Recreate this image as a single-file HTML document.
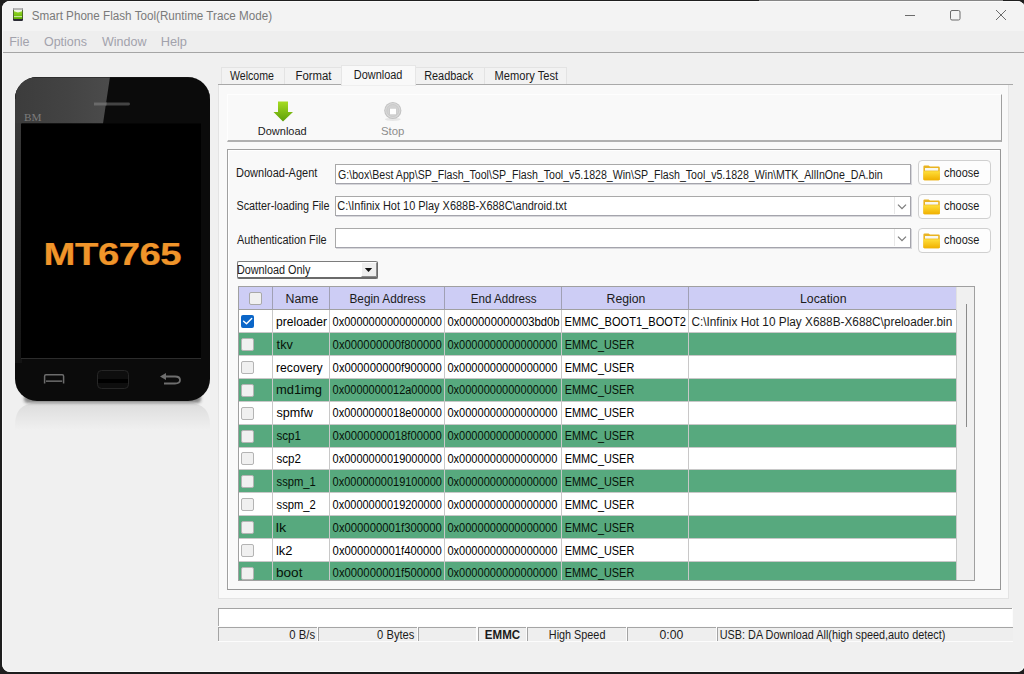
<!DOCTYPE html>
<html><head><meta charset="utf-8">
<style>
*{box-sizing:border-box;margin:0;padding:0}
html,body{width:1024px;height:674px;overflow:hidden;background:#1e1e1e;font-family:"Liberation Sans",sans-serif;}
.a{position:absolute}
.t{position:absolute;line-height:1;white-space:pre;font-size:11px;color:#1a1a1a}
#win{position:absolute;left:2px;top:1px;width:1023px;height:671px;background:#f0f0f0;border-radius:8px;overflow:hidden}
#rim{position:absolute;left:2px;top:1px;width:1023px;height:671px;border-radius:8px;border:1px solid #fafafa;z-index:5}
svg{position:absolute;left:0;top:0}
.tab{position:absolute;top:66.5px;height:18px;background:#f2f2f2;border:1px solid #e3e3e3;border-bottom:none}
.cb{position:absolute;width:13px;height:13px;border:1px solid #a8a8a8;border-radius:2px;background:#f0f0f0}
.btn{position:absolute;left:918px;width:73px;height:25px;border:1px solid #d0d0d0;border-radius:4px;background:#fdfdfd}
</style></head><body>
<div id="win">
  <div class="a" style="left:0;top:0;width:1030px;height:30px;background:#f3f3f3"></div>
  <div class="a" style="left:0;top:30px;width:1030px;height:21px;background:#eeeeee"></div>
  <div class="a" style="left:0;top:51px;width:1030px;height:1px;background:#a5a5a5"></div>
</div>
<!-- title -->
<svg width="1024" height="674" viewBox="0 0 1024 674">
  <rect x="759" y="0" width="244" height="1" fill="#858585"/>
  <defs>
    <linearGradient id="icg" x1="0" y1="0" x2="0" y2="1">
      <stop offset="0" stop-color="#9be02a"/><stop offset="1" stop-color="#5fae00"/>
    </linearGradient>
    <linearGradient id="hl" x1="0" y1="0" x2="1" y2="0">
      <stop offset="0" stop-color="#3a3a3a"/><stop offset="0.6" stop-color="#434343"/><stop offset="1" stop-color="#4c4c4c"/>
    </linearGradient>
    <linearGradient id="refl" x1="0" y1="0" x2="0" y2="1">
      <stop offset="0" stop-color="#dcdcdc"/><stop offset="0.5" stop-color="#e6e6e6"/><stop offset="1" stop-color="#f0f0f0"/>
    </linearGradient>
    <linearGradient id="arr" x1="0" y1="0" x2="0" y2="1">
      <stop offset="0" stop-color="#a6dc22"/><stop offset="1" stop-color="#5c9f08"/>
    </linearGradient>
    <linearGradient id="fold" x1="0" y1="0" x2="0" y2="1">
      <stop offset="0" stop-color="#ffdf3a"/><stop offset="1" stop-color="#f0b000"/>
    </linearGradient>
    <filter id="blur1" x="-20%" y="-50%" width="140%" height="200%"><feGaussianBlur stdDeviation="1.5"/></filter>
    <linearGradient id="lstrip" x1="0" y1="0" x2="0" y2="1"><stop offset="0" stop-color="#3a3a3a"/><stop offset="0.5" stop-color="#262626"/><stop offset="1" stop-color="#141414"/></linearGradient>
    <clipPath id="phc"><rect x="15" y="77" width="195" height="324" rx="22"/></clipPath>
  </defs>
  <!-- app icon -->
  <rect x="13" y="8" width="10" height="13" rx="1.2" fill="#2c2c36"/>
  <rect x="13" y="8" width="10" height="2" rx="1" fill="#b9b9b9"/>
  <rect x="13.6" y="10" width="8.8" height="9" fill="url(#icg)"/>
  <path d="M14 10 L22 10 L22 11.2 L18 12.6 L14 11.2 Z" fill="#eef4e4"/>
  <rect x="14" y="16.2" width="8" height="0.9" fill="#d8efb8"/>
  <!-- window controls -->
  <rect x="905" y="15" width="10" height="1" fill="#6b6b6b"/>
  <rect x="950.5" y="10.5" width="9.5" height="9.5" rx="1.5" fill="none" stroke="#6b6b6b" stroke-width="1"/>
  <path d="M996 10 L1006 20 M1006 10 L996 20" stroke="#6b6b6b" stroke-width="1"/>

  <!-- phone reflection -->
  <path d="M15 430 L15 425 Q15 403 37 403 L188 403 Q210 403 210 425 L210 430 Z" fill="url(#refl)"/>
  <rect x="24" y="394" width="177" height="9" rx="4" fill="#202020" opacity="0.5" filter="url(#blur1)"/>
  <!-- phone -->
  <rect x="15" y="77" width="195" height="324" rx="22" fill="#0b0b0b"/>
  <g clip-path="url(#phc)">
    <path d="M0 60 L112.5 60 L103 123.5 L0 123.5 Z" fill="url(#hl)"/>
    <rect x="14" y="123" width="8" height="240" fill="url(#lstrip)"/>
    <path d="M15 99 Q15 77 37 77 L188 77 Q210 77 210 99" fill="none" stroke="#1c1c1c" stroke-width="1"/>
  </g>
  <rect x="21" y="123.5" width="180" height="234.5" fill="#000"/>
  <rect x="21" y="358" width="180" height="1" fill="#2c2c2c"/>
  <rect x="94" y="102.6" width="36" height="2.8" rx="1.4" fill="#444"/><path d="M94 102.6 L106.8 102.6 L106.4 105.4 L94 105.4 Z" fill="#6a6a6a"/>
  <text x="24" y="120.5" font-family="Liberation Serif" font-size="10.5" fill="#7c7c7c" textLength="17.5" lengthAdjust="spacingAndGlyphs">BM</text>
  <g transform="translate(43.6,264.8) scale(1.215,1)"><text x="0" y="0" font-family="Liberation Sans" font-weight="700" font-size="31.5" letter-spacing="-0.4" fill="#f0952a" stroke="#f0952a" stroke-width="0.25">MT6765</text></g>
  <!-- menu button -->
  <path d="M44.6 383.6 L44.6 376.2 Q44.6 374.8 46 374.8 L62.2 374.8 Q63.6 374.8 63.6 376.2 L63.6 383.6" fill="none" stroke="#6c6c6c" stroke-width="1.5"/>
  <rect x="46" y="380.4" width="16.2" height="1.5" fill="#6c6c6c"/>
  <!-- home -->
  <rect x="97.5" y="370.5" width="31" height="18" rx="4" fill="#0e0e0e" stroke="#262626" stroke-width="1"/>
  <rect x="98" y="379" width="30" height="4" fill="#000"/>
  <!-- back -->
  <path d="M166 373 L160 376.5 L166 380 Z" fill="#6e6e6e"/>
  <path d="M165 376.5 L175 376.5 Q180 376.5 180 380 Q180 383.5 175 383.5 L164 383.5" fill="none" stroke="#6e6e6e" stroke-width="1.8"/>

</svg>


<!-- tab panel -->
<div class="a" style="left:218px;top:84px;width:791px;height:515px;background:#f9f9f9;border-left:1px solid #e3e3e3;border-right:1px solid #e3e3e3;border-bottom:1px solid #e3e3e3"></div>
<div class="tab" style="left:221px;width:64px"></div>
<div class="tab" style="left:284px;width:58px"></div>
<div class="tab" style="left:415px;width:70px"></div>
<div class="tab" style="left:484px;width:83px"></div>
<div class="a" style="left:218px;top:84px;width:795px;height:1px;background:#a9a9a9"></div>
<div class="a" style="left:341px;top:64.5px;width:75px;height:21px;background:#f9f9f9;border:1px solid #e6e6e6;border-bottom:none"></div>
<div class="a" style="left:342px;top:85px;width:73px;height:1px;background:#efefef"></div>

<!-- toolbar box -->
<div class="a" style="left:227px;top:94px;width:775px;height:48px;border-top:1px solid #fefefe;border-left:1px solid #fefefe;border-right:1px solid #a0a0a0;border-bottom:2px solid #b0b0b0"></div>

<!-- group box -->
<div class="a" style="left:227px;top:149px;width:774px;height:441px;border:1px solid #a0a0a0;border-right-color:#979797;border-bottom-color:#979797"></div>
<div class="a" style="left:228px;top:150px;width:771px;height:438px;border-top:1px solid #fff;border-left:1px solid #fff"></div>


<!-- inputs -->
<div class="a" style="left:335px;top:164px;width:576px;height:20px;background:#fff;border:1px solid #a9a9a9;border-right-color:#a4a4ac;border-bottom-color:#a4a4ac;box-shadow:1px 1px 0 #d6d6da"></div>
<div class="a" style="left:335px;top:196px;width:576px;height:20px;background:#fff;border:1px solid #a9a9a9;border-right-color:#a4a4ac;border-bottom-color:#a4a4ac;box-shadow:1px 1px 0 #d6d6da"></div>
<div class="a" style="left:894px;top:197px;width:15px;height:17px;border-left:1px solid #e8e8e8"></div>
<div class="a" style="left:335px;top:228px;width:576px;height:20px;background:#fff;border:1px solid #a9a9a9;border-right-color:#a4a4ac;border-bottom-color:#a4a4ac;box-shadow:1px 1px 0 #d6d6da"></div>
<div class="a" style="left:894px;top:229px;width:15px;height:17px;border-left:1px solid #e8e8e8"></div>

<!-- choose buttons -->
<div class="btn" style="top:160px"></div>
<div class="btn" style="top:194px"></div>
<div class="btn" style="top:228px"></div>

<!-- dropdown -->
<div class="a" style="left:237px;top:261px;width:141px;height:18px;background:#fff;border:1px solid #7c7c7c;border-radius:2px;border-right:2px solid #6a6a6a;border-bottom:2px solid #6a6a6a"></div>
<div class="a" style="left:361px;top:262px;width:15.5px;height:15px;background:#efefef;border-left:1.5px solid #fff;border-top:1.5px solid #fff;border-bottom:1.5px solid #8c8c8c;border-right:1.5px solid #8c8c8c"></div>

<!-- table -->
<div class="a" style="left:238px;top:286px;width:737px;height:295px;background:#fff;border:1px solid #a0a0a0;overflow:hidden">
<div class="a" style="left:0px;top:0px;width:717px;height:22px;background:#cdcdf5"></div>
<div class="a" style="left:0px;top:22px;width:717px;height:1px;background:#a0a0a0"></div>
<div class="a" style="left:33px;top:0px;width:1px;height:22px;background:#a0a0b4"></div>
<div class="a" style="left:90px;top:0px;width:1px;height:22px;background:#a0a0b4"></div>
<div class="a" style="left:205px;top:0px;width:1px;height:22px;background:#a0a0b4"></div>
<div class="a" style="left:322px;top:0px;width:1px;height:22px;background:#a0a0b4"></div>
<div class="a" style="left:449px;top:0px;width:1px;height:22px;background:#a0a0b4"></div>
<div class="a" style="left:717px;top:0px;width:1px;height:22px;background:#a0a0b4"></div>
<div class="a" style="left:717px;top:0px;width:18px;height:293px;background:#f0f0f0;border-left:1px solid #e2e2e2"></div>
<div class="a" style="left:726.5px;top:17px;width:1.5px;height:123px;background:#8a8a8a"></div>
<div class="a" style="left:10px;top:5px;width:13px;height:13px;border:1px solid #a8a8a8;border-radius:2px;background:#f0f0f0"></div>
<div class="a" style="left:0px;top:45.19999999999999px;width:717px;height:1px;background:#c8c8c8"></div>
<div class="a" style="left:33px;top:23.19999999999999px;width:1px;height:23px;background:#c8c8c8"></div>
<div class="a" style="left:90px;top:23.19999999999999px;width:1px;height:23px;background:#c8c8c8"></div>
<div class="a" style="left:205px;top:23.19999999999999px;width:1px;height:23px;background:#c8c8c8"></div>
<div class="a" style="left:322px;top:23.19999999999999px;width:1px;height:23px;background:#c8c8c8"></div>
<div class="a" style="left:449px;top:23.19999999999999px;width:1px;height:23px;background:#c8c8c8"></div>
<div class="a" style="left:717px;top:23.19999999999999px;width:1px;height:23px;background:#c8c8c8"></div>
<div class="a" style="left:2px;top:28.19999999999999px;width:13px;height:13px;border-radius:2px;background:#0b66c8"></div>
<div class="a" style="left:0px;top:46.06px;width:717px;height:22px;background:#57a97e"></div>
<div class="a" style="left:0px;top:68.06px;width:717px;height:1px;background:#c8c8c8"></div>
<div class="a" style="left:33px;top:46.06px;width:1px;height:23px;background:#c8c8c8"></div>
<div class="a" style="left:90px;top:46.06px;width:1px;height:23px;background:#c8c8c8"></div>
<div class="a" style="left:205px;top:46.06px;width:1px;height:23px;background:#c8c8c8"></div>
<div class="a" style="left:322px;top:46.06px;width:1px;height:23px;background:#c8c8c8"></div>
<div class="a" style="left:449px;top:46.06px;width:1px;height:23px;background:#c8c8c8"></div>
<div class="a" style="left:717px;top:46.06px;width:1px;height:23px;background:#c8c8c8"></div>
<div class="a" style="left:2px;top:51.06px;width:13px;height:13px;border:1px solid #b4b4b4;border-radius:2px;background:#f0f0f0"></div>
<div class="a" style="left:0px;top:90.92000000000002px;width:717px;height:1px;background:#c8c8c8"></div>
<div class="a" style="left:33px;top:68.92000000000002px;width:1px;height:23px;background:#c8c8c8"></div>
<div class="a" style="left:90px;top:68.92000000000002px;width:1px;height:23px;background:#c8c8c8"></div>
<div class="a" style="left:205px;top:68.92000000000002px;width:1px;height:23px;background:#c8c8c8"></div>
<div class="a" style="left:322px;top:68.92000000000002px;width:1px;height:23px;background:#c8c8c8"></div>
<div class="a" style="left:449px;top:68.92000000000002px;width:1px;height:23px;background:#c8c8c8"></div>
<div class="a" style="left:717px;top:68.92000000000002px;width:1px;height:23px;background:#c8c8c8"></div>
<div class="a" style="left:2px;top:73.92000000000002px;width:13px;height:13px;border:1px solid #b4b4b4;border-radius:2px;background:#f0f0f0"></div>
<div class="a" style="left:0px;top:91.77999999999997px;width:717px;height:22px;background:#57a97e"></div>
<div class="a" style="left:0px;top:113.77999999999997px;width:717px;height:1px;background:#c8c8c8"></div>
<div class="a" style="left:33px;top:91.77999999999997px;width:1px;height:23px;background:#c8c8c8"></div>
<div class="a" style="left:90px;top:91.77999999999997px;width:1px;height:23px;background:#c8c8c8"></div>
<div class="a" style="left:205px;top:91.77999999999997px;width:1px;height:23px;background:#c8c8c8"></div>
<div class="a" style="left:322px;top:91.77999999999997px;width:1px;height:23px;background:#c8c8c8"></div>
<div class="a" style="left:449px;top:91.77999999999997px;width:1px;height:23px;background:#c8c8c8"></div>
<div class="a" style="left:717px;top:91.77999999999997px;width:1px;height:23px;background:#c8c8c8"></div>
<div class="a" style="left:2px;top:96.77999999999997px;width:13px;height:13px;border:1px solid #b4b4b4;border-radius:2px;background:#f0f0f0"></div>
<div class="a" style="left:0px;top:136.64px;width:717px;height:1px;background:#c8c8c8"></div>
<div class="a" style="left:33px;top:114.63999999999999px;width:1px;height:23px;background:#c8c8c8"></div>
<div class="a" style="left:90px;top:114.63999999999999px;width:1px;height:23px;background:#c8c8c8"></div>
<div class="a" style="left:205px;top:114.63999999999999px;width:1px;height:23px;background:#c8c8c8"></div>
<div class="a" style="left:322px;top:114.63999999999999px;width:1px;height:23px;background:#c8c8c8"></div>
<div class="a" style="left:449px;top:114.63999999999999px;width:1px;height:23px;background:#c8c8c8"></div>
<div class="a" style="left:717px;top:114.63999999999999px;width:1px;height:23px;background:#c8c8c8"></div>
<div class="a" style="left:2px;top:119.63999999999999px;width:13px;height:13px;border:1px solid #b4b4b4;border-radius:2px;background:#f0f0f0"></div>
<div class="a" style="left:0px;top:137.5px;width:717px;height:22px;background:#57a97e"></div>
<div class="a" style="left:0px;top:159.5px;width:717px;height:1px;background:#c8c8c8"></div>
<div class="a" style="left:33px;top:137.5px;width:1px;height:23px;background:#c8c8c8"></div>
<div class="a" style="left:90px;top:137.5px;width:1px;height:23px;background:#c8c8c8"></div>
<div class="a" style="left:205px;top:137.5px;width:1px;height:23px;background:#c8c8c8"></div>
<div class="a" style="left:322px;top:137.5px;width:1px;height:23px;background:#c8c8c8"></div>
<div class="a" style="left:449px;top:137.5px;width:1px;height:23px;background:#c8c8c8"></div>
<div class="a" style="left:717px;top:137.5px;width:1px;height:23px;background:#c8c8c8"></div>
<div class="a" style="left:2px;top:142.5px;width:13px;height:13px;border:1px solid #b4b4b4;border-radius:2px;background:#f0f0f0"></div>
<div class="a" style="left:0px;top:182.36px;width:717px;height:1px;background:#c8c8c8"></div>
<div class="a" style="left:33px;top:160.36px;width:1px;height:23px;background:#c8c8c8"></div>
<div class="a" style="left:90px;top:160.36px;width:1px;height:23px;background:#c8c8c8"></div>
<div class="a" style="left:205px;top:160.36px;width:1px;height:23px;background:#c8c8c8"></div>
<div class="a" style="left:322px;top:160.36px;width:1px;height:23px;background:#c8c8c8"></div>
<div class="a" style="left:449px;top:160.36px;width:1px;height:23px;background:#c8c8c8"></div>
<div class="a" style="left:717px;top:160.36px;width:1px;height:23px;background:#c8c8c8"></div>
<div class="a" style="left:2px;top:165.36px;width:13px;height:13px;border:1px solid #b4b4b4;border-radius:2px;background:#f0f0f0"></div>
<div class="a" style="left:0px;top:183.22000000000003px;width:717px;height:22px;background:#57a97e"></div>
<div class="a" style="left:0px;top:205.22000000000003px;width:717px;height:1px;background:#c8c8c8"></div>
<div class="a" style="left:33px;top:183.22000000000003px;width:1px;height:23px;background:#c8c8c8"></div>
<div class="a" style="left:90px;top:183.22000000000003px;width:1px;height:23px;background:#c8c8c8"></div>
<div class="a" style="left:205px;top:183.22000000000003px;width:1px;height:23px;background:#c8c8c8"></div>
<div class="a" style="left:322px;top:183.22000000000003px;width:1px;height:23px;background:#c8c8c8"></div>
<div class="a" style="left:449px;top:183.22000000000003px;width:1px;height:23px;background:#c8c8c8"></div>
<div class="a" style="left:717px;top:183.22000000000003px;width:1px;height:23px;background:#c8c8c8"></div>
<div class="a" style="left:2px;top:188.22000000000003px;width:13px;height:13px;border:1px solid #b4b4b4;border-radius:2px;background:#f0f0f0"></div>
<div class="a" style="left:0px;top:228.08000000000004px;width:717px;height:1px;background:#c8c8c8"></div>
<div class="a" style="left:33px;top:206.07999999999998px;width:1px;height:23px;background:#c8c8c8"></div>
<div class="a" style="left:90px;top:206.07999999999998px;width:1px;height:23px;background:#c8c8c8"></div>
<div class="a" style="left:205px;top:206.07999999999998px;width:1px;height:23px;background:#c8c8c8"></div>
<div class="a" style="left:322px;top:206.07999999999998px;width:1px;height:23px;background:#c8c8c8"></div>
<div class="a" style="left:449px;top:206.07999999999998px;width:1px;height:23px;background:#c8c8c8"></div>
<div class="a" style="left:717px;top:206.07999999999998px;width:1px;height:23px;background:#c8c8c8"></div>
<div class="a" style="left:2px;top:211.07999999999998px;width:13px;height:13px;border:1px solid #b4b4b4;border-radius:2px;background:#f0f0f0"></div>
<div class="a" style="left:0px;top:228.94000000000005px;width:717px;height:22px;background:#57a97e"></div>
<div class="a" style="left:0px;top:250.94000000000005px;width:717px;height:1px;background:#c8c8c8"></div>
<div class="a" style="left:33px;top:228.94000000000005px;width:1px;height:23px;background:#c8c8c8"></div>
<div class="a" style="left:90px;top:228.94000000000005px;width:1px;height:23px;background:#c8c8c8"></div>
<div class="a" style="left:205px;top:228.94000000000005px;width:1px;height:23px;background:#c8c8c8"></div>
<div class="a" style="left:322px;top:228.94000000000005px;width:1px;height:23px;background:#c8c8c8"></div>
<div class="a" style="left:449px;top:228.94000000000005px;width:1px;height:23px;background:#c8c8c8"></div>
<div class="a" style="left:717px;top:228.94000000000005px;width:1px;height:23px;background:#c8c8c8"></div>
<div class="a" style="left:2px;top:233.94000000000005px;width:13px;height:13px;border:1px solid #b4b4b4;border-radius:2px;background:#f0f0f0"></div>
<div class="a" style="left:0px;top:273.79999999999995px;width:717px;height:1px;background:#c8c8c8"></div>
<div class="a" style="left:33px;top:251.79999999999995px;width:1px;height:23px;background:#c8c8c8"></div>
<div class="a" style="left:90px;top:251.79999999999995px;width:1px;height:23px;background:#c8c8c8"></div>
<div class="a" style="left:205px;top:251.79999999999995px;width:1px;height:23px;background:#c8c8c8"></div>
<div class="a" style="left:322px;top:251.79999999999995px;width:1px;height:23px;background:#c8c8c8"></div>
<div class="a" style="left:449px;top:251.79999999999995px;width:1px;height:23px;background:#c8c8c8"></div>
<div class="a" style="left:717px;top:251.79999999999995px;width:1px;height:23px;background:#c8c8c8"></div>
<div class="a" style="left:2px;top:256.79999999999995px;width:13px;height:13px;border:1px solid #b4b4b4;border-radius:2px;background:#f0f0f0"></div>
<div class="a" style="left:0px;top:274.65999999999997px;width:717px;height:22px;background:#57a97e"></div>
<div class="a" style="left:0px;top:296.65999999999997px;width:717px;height:1px;background:#c8c8c8"></div>
<div class="a" style="left:33px;top:274.65999999999997px;width:1px;height:23px;background:#c8c8c8"></div>
<div class="a" style="left:90px;top:274.65999999999997px;width:1px;height:23px;background:#c8c8c8"></div>
<div class="a" style="left:205px;top:274.65999999999997px;width:1px;height:23px;background:#c8c8c8"></div>
<div class="a" style="left:322px;top:274.65999999999997px;width:1px;height:23px;background:#c8c8c8"></div>
<div class="a" style="left:449px;top:274.65999999999997px;width:1px;height:23px;background:#c8c8c8"></div>
<div class="a" style="left:717px;top:274.65999999999997px;width:1px;height:23px;background:#c8c8c8"></div>
<div class="a" style="left:2px;top:279.65999999999997px;width:13px;height:13px;border:1px solid #b4b4b4;border-radius:2px;background:#f0f0f0"></div>
</div>

<svg width="1024" height="674" viewBox="0 0 1024 674">
  <defs>
    <linearGradient id="arr" x1="0" y1="0" x2="0" y2="1">
      <stop offset="0" stop-color="#a6dc22"/><stop offset="1" stop-color="#5c9f08"/>
    </linearGradient>
    <linearGradient id="fold" x1="0" y1="0" x2="0" y2="1">
      <stop offset="0" stop-color="#ffdf3a"/><stop offset="1" stop-color="#f0b000"/>
    </linearGradient>
  </defs>
  <!-- toolbar icons -->
  <path d="M278 101.5 L288 101.5 L288 112 L293 112 L283 121.5 L273.5 112 L278 112 Z" fill="url(#arr)"/>
  <ellipse cx="392.8" cy="119.3" rx="8" ry="1.6" fill="#e6e6e6"/>
  <circle cx="392.8" cy="110.5" r="8.6" fill="#c2c2c2"/>
  <circle cx="392.8" cy="110.5" r="7.6" fill="#d9d9d9"/>
  <circle cx="392.8" cy="110.5" r="6" fill="#d2d2d2" stroke="#c6c6c6" stroke-width="0.8"/>
  <rect x="389.6" y="108.3" width="6.6" height="6.4" fill="#bcbcbc"/>
  <rect x="390" y="108.6" width="6" height="5.8" fill="#ffffff"/>

  <!-- folders -->
  <g id="fd1">
    <path d="M923.4 167 L923.4 166.6 Q923.4 165.4 924.6 165.4 L928.6 165.4 L930 166.6 L938.6 166.6 Q939.8 166.6 939.8 167.8 L939.8 179 Q939.8 180.2 938.6 180.2 L924.6 180.2 Q923.4 180.2 923.4 179 Z" fill="#e9b320"/>
    <rect x="925" y="168" width="13.2" height="2.6" fill="#f8f8f0"/>
    <path d="M923.4 171.2 L939.8 171.2 L939.8 179 Q939.8 180.2 938.6 180.2 L924.6 180.2 Q923.4 180.2 923.4 179 Z" fill="url(#fold)"/>
  </g>
  <use href="#fd1" y="34"/>
  <use href="#fd1" y="68"/>
  <!-- combo chevrons -->
  <path d="M898 204.6 L902 208.6 L906 204.6" fill="none" stroke="#7c7c7c" stroke-width="1.3"/>
  <path d="M898 236.6 L902 240.6 L906 236.6" fill="none" stroke="#7c7c7c" stroke-width="1.3"/>
  <path d="M243.6 321.2 L246.5 323.8 L251.7 318.4" fill="none" stroke="#fff" stroke-width="1.4" stroke-linecap="round" stroke-linejoin="round"/>
  <!-- dropdown arrow -->
  <path d="M364.8 268 L372.2 268 L368.5 272 Z" fill="#111"/>
</svg>
<!-- progress + status -->
<div class="a" style="left:218px;top:608px;width:795px;height:34px;background:#fcfcfc"></div>
<div class="a" style="left:218px;top:608px;width:794px;height:18px;background:#fff;border-top:1px solid #a3a3a3;border-left:1.6px solid #a8a8a8"></div>
<div class="a" style="left:218px;top:627px;width:98.8px;height:14px;background:#eeeeee;border-top:1px solid #a5a5a5;border-left:1.2px solid #a3a3a3"></div>
<div class="a" style="left:318px;top:627px;width:98.6px;height:14px;background:#eeeeee;border-top:1px solid #a5a5a5;border-left:1.2px solid #a3a3a3"></div>
<div class="a" style="left:418px;top:627px;width:58.4px;height:14px;background:#eeeeee;border-top:1px solid #a5a5a5;border-left:1.2px solid #a3a3a3"></div>
<div class="a" style="left:478px;top:627px;width:47.9px;height:14px;background:#eeeeee;border-top:1px solid #a5a5a5;border-left:1.2px solid #a3a3a3"></div>
<div class="a" style="left:527px;top:627px;width:98.8px;height:14px;background:#eeeeee;border-top:1px solid #a5a5a5;border-left:1.2px solid #a3a3a3"></div>
<div class="a" style="left:627px;top:627px;width:88.8px;height:14px;background:#eeeeee;border-top:1px solid #a5a5a5;border-left:1.2px solid #a3a3a3"></div>
<div class="a" style="left:717px;top:627px;width:296.0px;height:14px;background:#eeeeee;border-top:1px solid #a5a5a5;border-left:1.2px solid #a3a3a3"></div>


<div id="rim"></div>
<svg width="1024" height="674" viewBox="0 0 1024 674" style="position:absolute;left:0;top:0;font-family:'Liberation Sans',sans-serif;white-space:pre" xml:space="preserve">
<text x="31.78" y="20.00" font-size="12.5" fill="#7a7a7a" textLength="240.30" lengthAdjust="spacingAndGlyphs">Smart Phone Flash Tool(Runtime Trace Mode)</text>
<text x="9.20" y="45.70" font-size="12" fill="#a2a2ac" textLength="20.22" lengthAdjust="spacingAndGlyphs">File</text>
<text x="43.94" y="45.70" font-size="12" fill="#a2a2ac" textLength="43.00" lengthAdjust="spacingAndGlyphs">Options</text>
<text x="102.00" y="45.70" font-size="12" fill="#a2a2ac" textLength="44.46" lengthAdjust="spacingAndGlyphs">Window</text>
<text x="160.67" y="45.70" font-size="12" fill="#a2a2ac" textLength="26.35" lengthAdjust="spacingAndGlyphs">Help</text>
<text x="230.00" y="80.00" font-size="12" fill="#1b1b1b" textLength="43.94" lengthAdjust="spacingAndGlyphs">Welcome</text>
<text x="295.49" y="80.00" font-size="12" fill="#1b1b1b" textLength="36.04" lengthAdjust="spacingAndGlyphs">Format</text>
<text x="353.82" y="79.00" font-size="12" fill="#1b1b1b" textLength="48.64" lengthAdjust="spacingAndGlyphs">Download</text>
<text x="424.13" y="80.00" font-size="12" fill="#1b1b1b" textLength="49.12" lengthAdjust="spacingAndGlyphs">Readback</text>
<text x="494.61" y="80.00" font-size="12" fill="#1b1b1b" textLength="63.42" lengthAdjust="spacingAndGlyphs">Memory Test</text>
<text x="257.82" y="135.40" font-size="11.8" fill="#1b1b1b" textLength="48.85" lengthAdjust="spacingAndGlyphs">Download</text>
<text x="380.99" y="134.70" font-size="11.8" fill="#8c8c8c" textLength="23.48" lengthAdjust="spacingAndGlyphs">Stop</text>
<text x="236.02" y="176.70" font-size="12" fill="#1b1b1b" textLength="81.31" lengthAdjust="spacingAndGlyphs">Download-Agent</text>
<text x="236.51" y="210.40" font-size="12" fill="#1b1b1b" textLength="93.03" lengthAdjust="spacingAndGlyphs">Scatter-loading File</text>
<text x="237.00" y="244.00" font-size="12" fill="#1b1b1b" textLength="89.65" lengthAdjust="spacingAndGlyphs">Authentication File</text>
<text x="338.07" y="179.30" font-size="12" fill="#1b1b1b" textLength="544.58" lengthAdjust="spacingAndGlyphs">G:\box\Best App\SP_Flash_Tool\SP_Flash_Tool_v5.1828_Win\SP_Flash_Tool_v5.1828_Win\MTK_AllInOne_DA.bin</text>
<text x="337.35" y="210.00" font-size="12" fill="#1b1b1b" textLength="229.38" lengthAdjust="spacingAndGlyphs">C:\Infinix Hot 10 Play X688B-X688C\android.txt</text>
<text x="944.06" y="176.50" font-size="12" fill="#1b1b1b" textLength="35.29" lengthAdjust="spacingAndGlyphs">choose</text>
<text x="944.06" y="210.25" font-size="12" fill="#1b1b1b" textLength="35.29" lengthAdjust="spacingAndGlyphs">choose</text>
<text x="944.06" y="244.00" font-size="12" fill="#1b1b1b" textLength="35.29" lengthAdjust="spacingAndGlyphs">choose</text>
<text x="236.93" y="274.00" font-size="12" fill="#1b1b1b" textLength="73.47" lengthAdjust="spacingAndGlyphs">Download Only</text>
<text x="285.51" y="302.70" font-size="12" fill="#1b1b1b" textLength="33.00" lengthAdjust="spacingAndGlyphs">Name</text>
<text x="349.46" y="302.70" font-size="12" fill="#1b1b1b" textLength="76.15" lengthAdjust="spacingAndGlyphs">Begin Address</text>
<text x="470.78" y="302.70" font-size="12" fill="#1b1b1b" textLength="65.82" lengthAdjust="spacingAndGlyphs">End Address</text>
<text x="606.62" y="302.70" font-size="12" fill="#1b1b1b" textLength="38.83" lengthAdjust="spacingAndGlyphs">Region</text>
<text x="800.02" y="302.70" font-size="12" fill="#1b1b1b" textLength="46.54" lengthAdjust="spacingAndGlyphs">Location</text>
<text x="276.08" y="325.90" font-size="12" fill="#000" textLength="50.98" lengthAdjust="spacingAndGlyphs">preloader</text>
<text x="332.62" y="325.90" font-size="12" fill="#000" textLength="109.28" lengthAdjust="spacingAndGlyphs">0x0000000000000000</text>
<text x="447.41" y="325.90" font-size="12" fill="#000" textLength="112.16" lengthAdjust="spacingAndGlyphs">0x000000000003bd0b</text>
<text x="564.61" y="325.90" font-size="12" fill="#000" textLength="121.20" lengthAdjust="spacingAndGlyphs">EMMC_BOOT1_BOOT2</text>
<text x="276.61" y="348.76" font-size="12" fill="#061208" textLength="16.19" lengthAdjust="spacingAndGlyphs">tkv</text>
<text x="332.60" y="348.76" font-size="12" fill="#061208" textLength="109.30" lengthAdjust="spacingAndGlyphs">0x000000000f800000</text>
<text x="447.41" y="348.76" font-size="12" fill="#061208" textLength="109.99" lengthAdjust="spacingAndGlyphs">0x0000000000000000</text>
<text x="564.63" y="348.76" font-size="12" fill="#061208" textLength="69.63" lengthAdjust="spacingAndGlyphs">EMMC_USER</text>
<text x="276.01" y="371.62" font-size="12" fill="#000" textLength="46.69" lengthAdjust="spacingAndGlyphs">recovery</text>
<text x="332.60" y="371.62" font-size="12" fill="#000" textLength="109.30" lengthAdjust="spacingAndGlyphs">0x000000000f900000</text>
<text x="447.41" y="371.62" font-size="12" fill="#000" textLength="109.99" lengthAdjust="spacingAndGlyphs">0x0000000000000000</text>
<text x="564.63" y="371.62" font-size="12" fill="#000" textLength="69.63" lengthAdjust="spacingAndGlyphs">EMMC_USER</text>
<text x="275.96" y="394.48" font-size="12" fill="#061208" textLength="46.03" lengthAdjust="spacingAndGlyphs">md1img</text>
<text x="332.62" y="394.48" font-size="12" fill="#061208" textLength="109.28" lengthAdjust="spacingAndGlyphs">0x0000000012a00000</text>
<text x="447.41" y="394.48" font-size="12" fill="#061208" textLength="109.99" lengthAdjust="spacingAndGlyphs">0x0000000000000000</text>
<text x="564.63" y="394.48" font-size="12" fill="#061208" textLength="69.63" lengthAdjust="spacingAndGlyphs">EMMC_USER</text>
<text x="276.48" y="417.34" font-size="12" fill="#000" textLength="36.48" lengthAdjust="spacingAndGlyphs">spmfw</text>
<text x="332.62" y="417.34" font-size="12" fill="#000" textLength="109.28" lengthAdjust="spacingAndGlyphs">0x0000000018e00000</text>
<text x="447.41" y="417.34" font-size="12" fill="#000" textLength="109.99" lengthAdjust="spacingAndGlyphs">0x0000000000000000</text>
<text x="564.63" y="417.34" font-size="12" fill="#000" textLength="69.63" lengthAdjust="spacingAndGlyphs">EMMC_USER</text>
<text x="276.51" y="440.20" font-size="12" fill="#061208" textLength="24.53" lengthAdjust="spacingAndGlyphs">scp1</text>
<text x="332.60" y="440.20" font-size="12" fill="#061208" textLength="109.30" lengthAdjust="spacingAndGlyphs">0x0000000018f00000</text>
<text x="447.41" y="440.20" font-size="12" fill="#061208" textLength="109.99" lengthAdjust="spacingAndGlyphs">0x0000000000000000</text>
<text x="564.63" y="440.20" font-size="12" fill="#061208" textLength="69.63" lengthAdjust="spacingAndGlyphs">EMMC_USER</text>
<text x="276.51" y="463.06" font-size="12" fill="#000" textLength="24.53" lengthAdjust="spacingAndGlyphs">scp2</text>
<text x="332.62" y="463.06" font-size="12" fill="#000" textLength="109.28" lengthAdjust="spacingAndGlyphs">0x0000000019000000</text>
<text x="447.41" y="463.06" font-size="12" fill="#000" textLength="109.99" lengthAdjust="spacingAndGlyphs">0x0000000000000000</text>
<text x="564.63" y="463.06" font-size="12" fill="#000" textLength="69.63" lengthAdjust="spacingAndGlyphs">EMMC_USER</text>
<text x="276.52" y="485.92" font-size="12" fill="#061208" textLength="39.30" lengthAdjust="spacingAndGlyphs">sspm_1</text>
<text x="332.62" y="485.92" font-size="12" fill="#061208" textLength="109.28" lengthAdjust="spacingAndGlyphs">0x0000000019100000</text>
<text x="447.41" y="485.92" font-size="12" fill="#061208" textLength="109.99" lengthAdjust="spacingAndGlyphs">0x0000000000000000</text>
<text x="564.63" y="485.92" font-size="12" fill="#061208" textLength="69.63" lengthAdjust="spacingAndGlyphs">EMMC_USER</text>
<text x="276.52" y="508.78" font-size="12" fill="#000" textLength="39.30" lengthAdjust="spacingAndGlyphs">sspm_2</text>
<text x="332.62" y="508.78" font-size="12" fill="#000" textLength="109.28" lengthAdjust="spacingAndGlyphs">0x0000000019200000</text>
<text x="447.41" y="508.78" font-size="12" fill="#000" textLength="109.99" lengthAdjust="spacingAndGlyphs">0x0000000000000000</text>
<text x="564.63" y="508.78" font-size="12" fill="#000" textLength="69.63" lengthAdjust="spacingAndGlyphs">EMMC_USER</text>
<text x="275.87" y="531.64" font-size="12" fill="#061208" textLength="10.36" lengthAdjust="spacingAndGlyphs">lk</text>
<text x="332.60" y="531.64" font-size="12" fill="#061208" textLength="109.30" lengthAdjust="spacingAndGlyphs">0x000000001f300000</text>
<text x="447.41" y="531.64" font-size="12" fill="#061208" textLength="109.99" lengthAdjust="spacingAndGlyphs">0x0000000000000000</text>
<text x="564.63" y="531.64" font-size="12" fill="#061208" textLength="69.63" lengthAdjust="spacingAndGlyphs">EMMC_USER</text>
<text x="275.96" y="554.50" font-size="12" fill="#000" textLength="16.43" lengthAdjust="spacingAndGlyphs">lk2</text>
<text x="332.60" y="554.50" font-size="12" fill="#000" textLength="109.30" lengthAdjust="spacingAndGlyphs">0x000000001f400000</text>
<text x="447.41" y="554.50" font-size="12" fill="#000" textLength="109.99" lengthAdjust="spacingAndGlyphs">0x0000000000000000</text>
<text x="564.63" y="554.50" font-size="12" fill="#000" textLength="69.63" lengthAdjust="spacingAndGlyphs">EMMC_USER</text>
<text x="275.98" y="577.36" font-size="12" fill="#061208" textLength="26.45" lengthAdjust="spacingAndGlyphs">boot</text>
<text x="332.60" y="577.36" font-size="12" fill="#061208" textLength="109.30" lengthAdjust="spacingAndGlyphs">0x000000001f500000</text>
<text x="447.41" y="577.36" font-size="12" fill="#061208" textLength="109.99" lengthAdjust="spacingAndGlyphs">0x0000000000000000</text>
<text x="564.63" y="577.36" font-size="12" fill="#061208" textLength="69.63" lengthAdjust="spacingAndGlyphs">EMMC_USER</text>
<text x="691.41" y="325.90" font-size="12" fill="#1b1b1b" textLength="260.81" lengthAdjust="spacingAndGlyphs">C:\Infinix Hot 10 Play X688B-X688C\preloader.bin</text>
<text x="289.30" y="639.00" font-size="12" fill="#1b1b1b" textLength="25.79" lengthAdjust="spacingAndGlyphs">0 B/s</text>
<text x="377.11" y="639.00" font-size="12" fill="#1b1b1b" textLength="37.28" lengthAdjust="spacingAndGlyphs">0 Bytes</text>
<text x="484.85" y="639.00" font-size="12" fill="#1b1b1b" font-weight="700" textLength="35.26" lengthAdjust="spacingAndGlyphs">EMMC</text>
<text x="548.83" y="639.00" font-size="12" fill="#1b1b1b" textLength="56.58" lengthAdjust="spacingAndGlyphs">High Speed</text>
<text x="659.57" y="639.00" font-size="12" fill="#1b1b1b" textLength="23.77" lengthAdjust="spacingAndGlyphs">0:00</text>
<text x="719.79" y="639.00" font-size="12" fill="#1b1b1b" textLength="225.54" lengthAdjust="spacingAndGlyphs">USB: DA Download All(high speed,auto detect)</text>
</svg>
</body></html>
